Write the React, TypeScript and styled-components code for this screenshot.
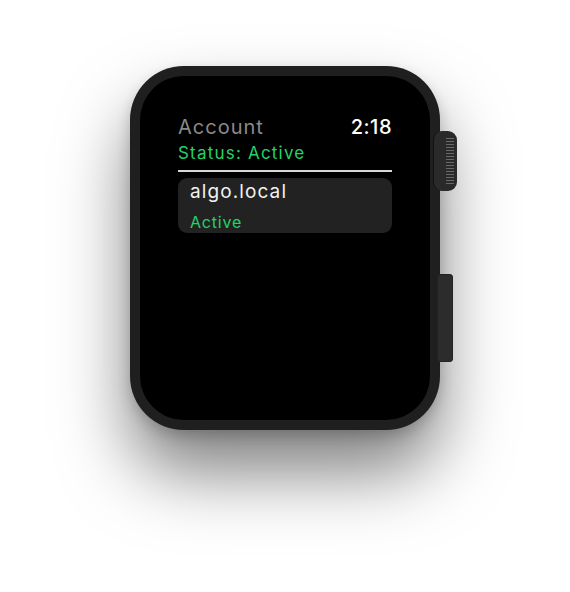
import React from 'react';
import styled, { createGlobalStyle } from 'styled-components';

const GlobalStyle = createGlobalStyle`
  html, body {
    margin: 0;
    padding: 0;
    background: #ffffff;
  }
  body {
    font-family: Inter, "Noto Sans", sans-serif;
  }
`;

const Page = styled.div`
  width: 570px;
  height: 592px;
  display: flex;
  justify-content: center;
  padding-top: 66px;
  box-sizing: border-box;
`;

const WatchCase = styled.div`
  position: relative;
  width: 310px;
  height: 364px;
  padding: 10px;
  box-sizing: border-box;
  background: #1f1f1f;
  border-radius: 54px;
  box-shadow: 0 42px 70px rgba(0, 0, 0, 0.5), 0 6px 14px rgba(0, 0, 0, 0.18);
`;

const Crown = styled.div`
  position: absolute;
  left: 303px;
  top: 65px;
  width: 24px;
  height: 60px;
  box-sizing: border-box;
  background: #2a2a2a;
  border-radius: 9px;
  border-left: 1px solid #111;
  display: flex;
  flex-direction: column;
  justify-content: center;
  align-items: flex-end;
  gap: 2px;
  padding-right: 3px;
`;

const Ridge = styled.span`
  width: 8px;
  height: 1px;
  background: #6a6a6a;
`;

const SideButton = styled.div`
  position: absolute;
  left: 307px;
  top: 208px;
  width: 16px;
  height: 88px;
  background: #2c2c2c;
  border-radius: 3px;
  border: 1px solid #222;
  box-sizing: border-box;
`;

const Screen = styled.div`
  width: 100%;
  height: 100%;
  background: #000;
  border-radius: 44px;
  padding: 39px 38px 0;
  box-sizing: border-box;
  display: flex;
  flex-direction: column;
`;

const HeaderRow = styled.div`
  display: flex;
  justify-content: space-between;
  align-items: baseline;
  line-height: 24px;
`;

const Title = styled.span`
  color: #8a8a8a;
  font-size: 20px;
  letter-spacing: 1px;
`;

const Clock = styled.span`
  color: #ffffff;
  font-size: 20px;
  font-weight: 500;
  letter-spacing: 0.5px;
`;

const Status = styled.div`
  color: #22d369;
  font-size: 17px;
  line-height: 22px;
  letter-spacing: 1.2px;
  margin-top: 3px;
`;

const Divider = styled.div`
  height: 2px;
  background: #d8d8d8;
  margin-top: 6px;
`;

const Card = styled.div`
  margin-top: 6px;
  height: 55px;
  background: #222222;
  border-radius: 9px;
  padding: 2px 12px 0;
  box-sizing: border-box;
  display: flex;
  flex-direction: column;
`;

const CardTitle = styled.div`
  color: #f2f2f2;
  font-size: 19px;
  line-height: 24px;
  letter-spacing: 1.1px;
`;

const CardStatus = styled.div`
  color: #22d369;
  font-size: 16px;
  line-height: 20px;
  letter-spacing: 0.8px;
  margin-top: 8px;
`;

export default function App() {
  return (
    <>
      <GlobalStyle />
      <Page>
        <WatchCase>
          <Screen>
            <HeaderRow>
              <Title>Account</Title>
              <Clock>2:18</Clock>
            </HeaderRow>
            <Status>Status: Active</Status>
            <Divider />
            <Card>
              <CardTitle>algo.local</CardTitle>
              <CardStatus>Active</CardStatus>
            </Card>
          </Screen>
          <Crown>
            {Array.from({ length: 16 }).map((_, i) => (
              <Ridge key={i} />
            ))}
          </Crown>
          <SideButton />
        </WatchCase>
      </Page>
    </>
  );
}
